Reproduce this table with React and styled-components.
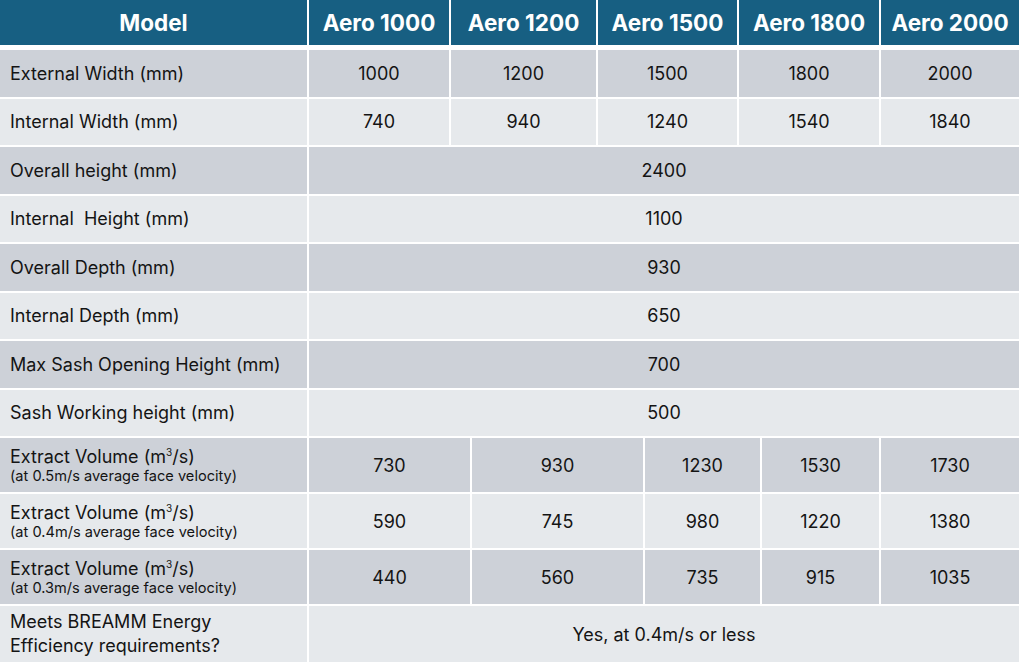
import React from 'react';
import styled, { createGlobalStyle } from 'styled-components';

const GlobalStyle = createGlobalStyle`
  html, body {
    margin: 0;
    padding: 0;
    background: #ffffff;
  }
  body {
    font-family: Inter, "Open Sans", "Liberation Sans", sans-serif;
    color: #111111;
  }
`;

const models = ['Aero 1000', 'Aero 1200', 'Aero 1500', 'Aero 1800', 'Aero 2000'];

const evenCols = '307px 140px 145px 139px 140px 1fr';
const extractCols = '307px 161px 171px 115px 117px 1fr';
const spanCols = '307px 1fr';

const rows = [
  { label: 'External Width (mm)', values: ['1000', '1200', '1500', '1800', '2000'], cols: evenCols },
  { label: 'Internal Width (mm)', values: ['740', '940', '1240', '1540', '1840'], cols: evenCols },
  { label: 'Overall height (mm)', values: ['2400'], cols: spanCols },
  { label: 'Internal\u00a0 Height (mm)', values: ['1100'], cols: spanCols },
  { label: 'Overall Depth (mm)', values: ['930'], cols: spanCols },
  { label: 'Internal Depth (mm)', values: ['650'], cols: spanCols },
  { label: 'Max Sash Opening Height (mm)', values: ['700'], cols: spanCols },
  { label: 'Sash Working height (mm)', values: ['500'], cols: spanCols },
];

const extractRows = [
  { speed: '0.5', values: ['730', '930', '1230', '1530', '1730'] },
  { speed: '0.4', values: ['590', '745', '980', '1220', '1380'] },
  { speed: '0.3', values: ['440', '560', '735', '915', '1035'] },
];

const Table = styled.div`
  width: 1019px;
  display: flex;
  flex-direction: column;
  gap: 2px;
  background: #ffffff;
`;

const Row = styled.div`
  display: grid;
  grid-template-columns: ${(p) => p.cols};
  column-gap: 2px;
  height: ${(p) => p.h}px;
`;

const HeaderRow = styled(Row)`
  margin-bottom: 3px;
`;

const HeadCell = styled.div`
  background: #175f82;
  color: #ffffff;
  font-weight: 700;
  font-size: 22.5px;
  display: flex;
  align-items: center;
  justify-content: center;
  padding-bottom: 1px;
`;

const Cell = styled.div`
  background: ${(p) => (p.dark ? '#cdd1d8' : '#e6e9ec')};
  display: flex;
  align-items: center;
  justify-content: center;
  font-size: 18px;
  color: #141414;
`;

const LabelCell = styled(Cell)`
  justify-content: flex-start;
  padding-left: 10px;
`;

const Stack = styled.div`
  display: flex;
  flex-direction: column;
`;

const Main = styled.span`
  font-size: 18px;
  line-height: 21px;

  sup {
    font-size: 10px;
    line-height: 0;
    vertical-align: 7px;
  }
`;

const Sub = styled.span`
  font-size: 14.6px;
  line-height: 18px;
`;

const TwoLine = styled.span`
  font-size: 18px;
  line-height: 24px;
`;

export default function App() {
  return (
    <>
      <GlobalStyle />
      <Table>
        <HeaderRow cols={evenCols} h={45}>
          <HeadCell>Model</HeadCell>
          {models.map((m) => (
            <HeadCell key={m}>{m}</HeadCell>
          ))}
        </HeaderRow>

        {rows.map((r, i) => (
          <Row key={r.label} cols={r.cols} h={46.5}>
            <LabelCell dark={i % 2 === 0}>{r.label}</LabelCell>
            {r.values.map((v, j) => (
              <Cell key={j} dark={i % 2 === 0}>{v}</Cell>
            ))}
          </Row>
        ))}

        {extractRows.map((r, i) => (
          <Row key={r.speed} cols={extractCols} h={54}>
            <LabelCell dark={i % 2 === 0}>
              <Stack>
                <Main>
                  Extract Volume (m<sup>3</sup>/s)
                </Main>
                <Sub>(at {r.speed}m/s average face velocity)</Sub>
              </Stack>
            </LabelCell>
            {r.values.map((v, j) => (
              <Cell key={j} dark={i % 2 === 0}>{v}</Cell>
            ))}
          </Row>
        ))}

        <Row cols={spanCols} h={56}>
          <LabelCell>
            <TwoLine>
              Meets BREAMM Energy
              <br />
              Efficiency requirements?
            </TwoLine>
          </LabelCell>
          <Cell>Yes, at 0.4m/s or less</Cell>
        </Row>
      </Table>
    </>
  );
}
